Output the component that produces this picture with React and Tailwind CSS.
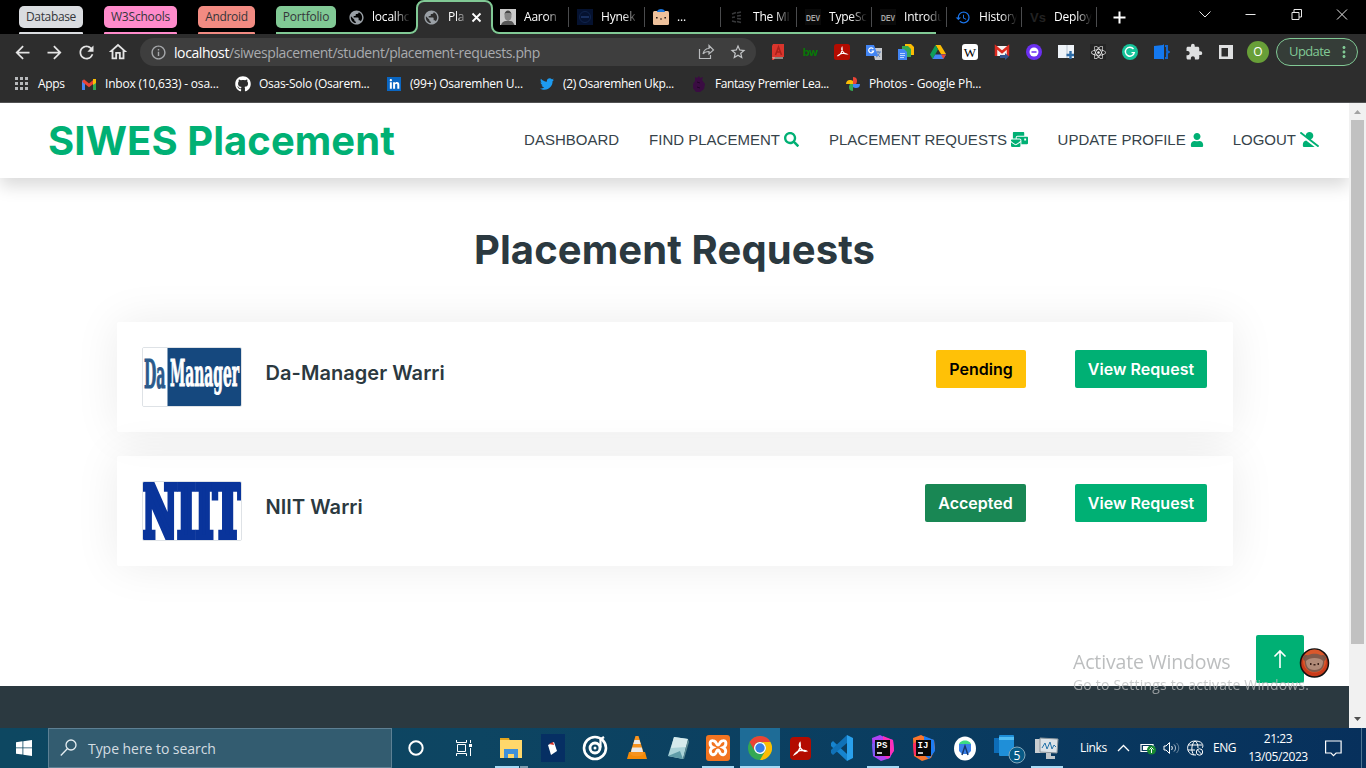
import React from "react";
import { FaSearch, FaMailBulk, FaUser, FaUserSlash, FaGithub, FaTwitter, FaLinkedinIn, FaReact } from "react-icons/fa";
import {
  MdArrowBack, MdArrowForward, MdRefresh, MdOutlineHome, MdInfoOutline, MdStarBorder,
  MdExtension, MdHistory, MdPublic, MdMoreVert,
} from "react-icons/md";

const UI = "font-['Open_Sans','Noto_Sans',sans-serif]";

/* ---------- tab strip ---------- */

function Group({ label, className, bar }) {
  return (
    <div className={"flex h-[34px] flex-col justify-between pt-[6px] " + className}>
      <div className={"flex h-[22px] items-center justify-center rounded-[5px] text-[12px] text-[#35363a] " + bar}>{label}</div>
      <div className={"h-[2px] rounded-t-[1px] " + bar} />
    </div>
  );
}

function Tab({ icon, label, className = "w-[75px]", line = true }) {
  return (
    <div className={"flex h-[34px] shrink-0 items-center pl-[8px] " + className}>
      <div className="flex h-4 w-4 shrink-0 items-center justify-center">{icon}</div>
      <div className="ml-[8px] whitespace-nowrap text-[12px] tracking-[-0.2px] text-white [mask-image:linear-gradient(90deg,#000_22px,transparent_38px)]">
        {label}
      </div>
      {line && <div className="ml-auto h-[20px] w-px bg-[#4a4b4d]" />}
    </div>
  );
}

function DevIcon() {
  return (
    <svg width="16" height="16" className="overflow-visible">
      <rect width="16" height="16" fill="#0a0a0a" />
      <text x="1" y="11.500" fontSize="9" fontWeight="bold" fontFamily="Liberation Sans, sans-serif" textLength="14" lengthAdjust="spacingAndGlyphs" fill="#a8a8a8">DEV</text>
    </svg>
  );
}

function TabStrip() {
  return (
    <div className="relative flex h-[34px] w-full bg-black">
      <svg className="absolute left-0 top-0" width="1366" height="34">
        <path d="M411 34c4 0 6-3 6-7V8c0-4 3-7 7-7h61c4 0 7 3 7 7v19c0 4 2 7 6 7z" fill="#2d2d2d" />
        <path d="M276 33h134c4 0 7-3 7-7V8c0-4 3-7 7-7h61c4 0 7 3 7 7v18c0 4 3 7 7 7h437" fill="none" stroke="#81c995" strokeWidth="2" />
      </svg>
      <div className="relative flex">
        <Group label="Database" className="ml-[19px] w-[64px] tracking-[-0.35px]" bar="bg-[#dadce0]" />
        <Group label="W3Schools" className="ml-[21px] w-[73px] tracking-[-0.2px]" bar="bg-[#ff8bcb]" />
        <Group label="Android" className="ml-[21px] w-[57px] tracking-[-0.35px]" bar="bg-[#f28b82]" />
        <Group label="Portfolio" className="ml-[21px] w-[60px] tracking-[-0.2px]" bar="bg-[#81c995]" />
        <Tab icon={<MdPublic size={17} color="#9aa0a6" className="shrink-0" />} label="localhc" className="ml-[4px] w-[76px]" line={false} />
        <div className="flex h-[34px] w-[76px] items-center pl-[8px]">
          <MdPublic size={17} color="#9aa0a6" className="-ml-px shrink-0" />
          <div className="ml-[8px] w-[18px] whitespace-nowrap text-[12px] tracking-[-0.2px] text-white [mask-image:linear-gradient(90deg,#000_8px,transparent_20px)]">Pla</div>
          <svg className="ml-[5px]" width="11" height="11" viewBox="0 0 11 11"><path d="m1.500 1.500 8 8m0-8-8 8" stroke="#fff" strokeWidth="1.800" /></svg>
        </div>
        <Tab
          className="w-[77px]"
          label="Aaron"
          icon={
            <svg width="16" height="16"><rect width="16" height="16" fill="#c9c9c9" /><path d="M1 16c1-3 3-4 4.500-4h5c2 0 3 2 4 4z" fill="#555" /><ellipse cx="8" cy="7" rx="3.500" ry="5" fill="#858585" /><path d="M4.500 6c0-6 7-6 7 0l-1-2h-5z" fill="#444" /></svg>
          }
        />
        <Tab className="w-[76px]" label="Hynek" icon={<svg width="16" height="16"><rect width="16" height="16" fill="#051230" /><circle cx="8" cy="8" r="5.500" fill="none" stroke="#10244c" /><path d="M4 8h8" stroke="#182f5e" strokeWidth="2" /></svg>} />
        <Tab
          className="w-[76px]"
          label="..."
          icon={<svg width="16" height="16"><rect y="2" width="16" height="14" rx="1.500" fill="#eec19c" /><path d="M4 3c0-4 8-4 8 0z" fill="#1a73d9" /><path d="M3 8h1.600v1.600H3zM11.400 8H13v1.600h-1.600zM7 9.500h2v1H7z" fill="#2a1c14" /></svg>}
        />
        <Tab className="w-[76px]" label="The MI" icon={<svg width="16" height="16" fill="none" stroke="#38393b" strokeWidth="1.500"><path d="m3 5 4-1.500M3 8.500 6 8m-3 4 4 1M8 4l4-1M8 7l4-.5M8 9.500l4 .5M8 12.500l4 1" /></svg>} />
        <Tab label="TypeSc" icon={<DevIcon />} />
        <Tab label="Introdu" icon={<DevIcon />} />
        <Tab label="History" icon={<MdHistory size={17} color="#1a73e8" />} />
        <Tab label="Deploy" icon={<div className="font-['Liberation_Sans',sans-serif] text-[13px] font-bold leading-none text-[#222]">Vs</div>} />
        <div className="ml-[16px] flex items-center"><svg width="13" height="13" viewBox="0 0 13 13"><path d="M6.500 0.500v12M0.500 6.500h12" stroke="#fff" strokeWidth="2" /></svg></div>
      </div>
      <svg className="relative ml-auto mr-[18px] mt-[8px]" width="150" height="13" fill="none" stroke="#e8e8e8">
        <path d="m1.500 3.500 5.500 5.500 5.500-5.500" />
        <path d="M47.500 6.500h10M94 4.500h7v7h-7zM96 4V1.500h7.500v7.500H101M139 1.500l10 10m0-10-10 10" />
      </svg>
    </div>
  );
}

/* ---------- toolbar ---------- */

function Slot({ children }) {
  return <div className="flex h-8 w-8 shrink-0 items-center justify-center">{children}</div>;
}

function Extensions() {
  return (
    <div className="ml-[6px] flex">
      <Slot><svg width="16" height="16"><path d="M3 0h11v13H5l-1 3H2V2z" fill="#d9352c" /><path d="m5.500 11 3-8 3 8m-5-3h4" fill="none" stroke="#a8201a" strokeWidth="1.500" /><path d="M2 13.500h11v1H3z" fill="#e7e3d8" /></svg></Slot>
      <Slot><span className="font-['Inter',sans-serif] text-[11px] font-bold leading-none tracking-[-0.8px] text-[#077807]">bw</span></Slot>
      <Slot><svg width="16" height="16"><rect width="16" height="16" rx="2.500" fill="#b30b00" /><path d="M3.500 12c3-1 5.500-5 4.500-8.500C7 5 9 10 12.500 10 10 8.500 6 9.500 3.500 12z" fill="none" stroke="#fff" strokeWidth="1.200" /></svg></Slot>
      <Slot><svg width="18" height="16"><path d="M7 4h10v12H10z" fill="#c6c9ce" /><path d="M10 8h6m-3-1v2m-2 4c2-1 3-2 3.500-5m-3 1 3.500 4" stroke="#5c80b8" fill="none" /><path d="M1 1h8l4 11H1z" fill="#4285f4" /><path d="M8.300 5A2.500 2.500 0 1 0 8.600 7H6.500" fill="none" stroke="#fff" strokeWidth="1.200" /></svg></Slot>
      <Slot><svg width="16" height="16"><path d="M7 0h6l3 3v8H7z" fill="#fbbc04" /><path d="M4 2h6l3 3v8H4z" fill="#34a853" /><path d="M0 5h6l3 3v8H0z" fill="#4285f4" /><path d="M2 9.500h5m-5 2h5m-5 2h4" stroke="#bcd4ff" /></svg></Slot>
      <Slot><svg width="16" height="16"><path d="M5.500 1h5L16 10h-5z" fill="#fbbc04" /><path d="M5.500 1 0 10.500 2.600 15 8 5.400z" fill="#0f9d58" /><path d="M5.200 10.500H16L13.300 15H2.600z" fill="#4285f4" /><path d="m11 10.500 5 0-2.700 4.500z" fill="#ea4335" /></svg></Slot>
      <Slot><div className="flex h-4 w-4 items-center justify-center rounded-[3px] bg-white font-['Liberation_Serif',serif] text-[13px] leading-none text-black">W</div></Slot>
      <Slot><svg width="16" height="16"><path d="M1 2h14v10H1z" fill="#f4f4f4" /><path d="M2 12V3l6 5 6-5v9" fill="none" stroke="#dc2b20" strokeWidth="2.500" /><path d="M6 11h5V9l4 3.500L11 16v-2H6z" fill="#35548e" /></svg></Slot>
      <Slot><svg width="16" height="16"><circle cx="8" cy="8" r="8" fill="#6b2ff0" /><circle cx="8" cy="8" r="4.500" fill="#fff" /><path d="M5.500 8h5" stroke="#6b2ff0" strokeWidth="1.500" /></svg></Slot>
      <Slot><svg width="16" height="16"><path d="M0 1h16v13H0z" fill="#eef3f8" /><path d="M9 1v13" stroke="#b8c3ce" /><path d="M12.500 7v8M8.500 11h8" stroke="#2d6ca8" strokeWidth="2.400" /></svg></Slot>
      <Slot><div className="flex h-4 w-4 items-center justify-center bg-[#242424]"><FaReact size={15} color="#f1f1f1" /></div></Slot>
      <Slot><svg width="16" height="16"><circle cx="8" cy="8" r="8" fill="#15c39a" /><path d="M11.500 5A4.500 4.500 0 1 0 12.300 8.600H9.500" fill="none" stroke="#fff" strokeWidth="1.400" /></svg></Slot>
      <Slot><svg width="16" height="16"><path d="M0 2 9 1l1-1v16l-1-1H0z" fill="#1479f0" /><path d="M11 2h2v5l2 1-2 1v5h-2" fill="none" stroke="#1267cf" strokeWidth="2" /></svg></Slot>
      <Slot><MdExtension size={18} color="#dfe0e1" /></Slot>
      <Slot><svg width="14" height="14"><path d="M0 0h14v14H0z" fill="#dfe0e1" /><path d="M2.500 3H9v8.500H2.500z" fill="#2d2d2d" /></svg></Slot>
    </div>
  );
}

function Toolbar() {
  return (
    <div className="flex h-[36px] w-full items-center bg-[#2d2d2d] pl-[6px]">
      <Slot><MdArrowBack size={21} color="#e4e4e4" /></Slot>
      <Slot><MdArrowForward size={21} color="#e4e4e4" /></Slot>
      <Slot><MdRefresh size={21} color="#e4e4e4" /></Slot>
      <Slot><MdOutlineHome size={22} color="#e4e4e4" /></Slot>
      <div className="ml-[6px] flex h-[28px] w-[616px] shrink-0 items-center rounded-full bg-[#3e3e3e] pl-[10px]">
        <MdInfoOutline size={17} color="#a6a8ab" />
        <div className="ml-[7px] whitespace-nowrap text-[14px] tracking-[-0.41px] text-[#a9abae]">
          <span className="text-white">localhost</span>/siwesplacement/student/placement-requests.php
        </div>
        <svg className="ml-auto mr-[13px]" width="18" height="16" fill="none" stroke="#b9bbbd" strokeWidth="1.200"><path d="M1.500 5v9.500h11V11M5 10c1-4 3-5.500 6-5.500V1.500L15.500 6 11 10V7.500C8.500 7.500 6.500 8 5 10z" /></svg>
        <MdStarBorder className="mr-[9px]" size={18} color="#c4c6c8" />
      </div>
      <Extensions />
      <div className="ml-[5px] flex h-[22px] w-[22px] shrink-0 items-center justify-center rounded-full bg-[#689f38] text-[12px] text-white">O</div>
      <div className="ml-[7px] flex h-[28px] w-[82px] shrink-0 items-center rounded-full border border-[#81c995] bg-[#353d38] pl-[12px] text-[13px] tracking-[-0.6px] text-[#81c995]">
        Update
        <MdMoreVert className="ml-auto mr-[4px]" size={18} />
      </div>
    </div>
  );
}

/* ---------- bookmarks ---------- */

function Bookmark({ icon, children, className }) {
  return (
    <div className={"flex shrink-0 items-center " + className}>
      <div className="flex h-4 w-4 items-center justify-center">{icon}</div>
      <div className="ml-[8px] whitespace-nowrap text-[12px] text-white">{children}</div>
    </div>
  );
}

function Bookmarks() {
  return (
    <div className="flex h-[33px] w-full items-center border-b border-[#515253] bg-[#2d2d2d] pb-[4px] pl-[14px]">
      <Bookmark className="w-[67px] tracking-[-0.3px]" icon={<svg width="14" height="14" fill="#b7b9bb"><path d="M0 0h3v3H0zM5 0h3v3H5zM10 0h3v3h-3zM0 5h3v3H0zM5 5h3v3H5zM10 5h3v3h-3zM0 10h3v3H0zM5 10h3v3H5zM10 10h3v3h-3z" /></svg>}>Apps</Bookmark>
      <Bookmark className="w-[154px] tracking-[-0.2px]" icon={<svg width="14" height="11"><path d="M1.500 11V1.500" stroke="#4285f4" strokeWidth="3" /><path d="M12.500 11V1.500" stroke="#34a853" strokeWidth="3" /><path d="M1 1.500 7 6.300l6-4.800" fill="none" stroke="#ea4335" strokeWidth="3" /><path d="M11 0h3v4l-3 2z" fill="#fbbc04" /></svg>}>Inbox (10,633) - osa...</Bookmark>
      <Bookmark className="w-[151px] tracking-[-0.28px]" icon={<FaGithub size={16} color="#fff" />}>Osas-Solo (Osarem...</Bookmark>
      <Bookmark className="w-[153px] tracking-[-0.26px]" icon={<div className="flex h-[14px] w-[14px] items-center justify-center bg-[#0a66c2]"><FaLinkedinIn size={11} color="#fff" /></div>}>(99+) Osaremhen U...</Bookmark>
      <Bookmark className="w-[152px] tracking-[-0.36px]" icon={<FaTwitter size={14} color="#1d9bf0" />}>(2) Osaremhen Ukp...</Bookmark>
      <Bookmark className="w-[154px] tracking-[-0.42px]" icon={<svg width="14" height="16"><path d="m3 1 2 1 2-2 1 2 3-1-1 3 3 4-1 5-4 3H4l-3-4 0-4 2-3z" fill="#3a0c42" /><path d="m5 6 3 1m-3 4 3 1" stroke="#220528" /></svg>}>Fantasy Premier Lea...</Bookmark>
      <Bookmark className="tracking-[-0.16px]" icon={<svg width="16" height="16"><path d="M8 8V1c5 0 4.500 5 3 7z" fill="#ea4335" /><path d="M8 8h7c0 5-5 4.500-7 3z" fill="#4285f4" /><path d="M8 8v7c-5 0-4.500-5-3-7z" fill="#34a853" /><path d="M8 8H1c0-5 5-4.500 7-3z" fill="#fbbc04" /></svg>}>Photos - Google Ph...</Bookmark>
    </div>
  );
}

/* ---------- page ---------- */

function NavItem({ children, icon, className = "" }) {
  return (
    <a className={"flex items-center whitespace-nowrap " + className}>
      {children}
      {icon && <span className="-mt-px ml-[4px] text-[#00b074]">{icon}</span>}
    </a>
  );
}

function Header() {
  return (
    <header className="flex h-[75px] w-full shrink-0 items-center justify-between bg-white pl-[48px] pr-[30px] shadow-[0_8px_16px_rgba(0,0,0,0.15)]">
      <h1 className="font-['Inter',sans-serif] text-[40px] font-bold leading-[48px] tracking-[0.05px] text-[#00b074]">SIWES Placement</h1>
      <nav className="flex items-center gap-[29px] pb-px font-['Liberation_Sans',Arial,sans-serif] text-[15px] text-[#36434a]">
        <NavItem className="mr-px">DASHBOARD</NavItem>
        <NavItem className="mr-px" icon={<FaSearch size={15} />}>FIND PLACEMENT</NavItem>
        <NavItem className="mr-[0.500px]" icon={<FaMailBulk size={17} />}>PLACEMENT REQUESTS</NavItem>
        <NavItem icon={<FaUser size={14} />}>UPDATE PROFILE</NavItem>
        <NavItem icon={<FaUserSlash size={19} />}>LOGOUT</NavItem>
      </nav>
    </header>
  );
}

function DaManagerLogo() {
  return (
    <svg width="98" height="58" viewBox="0 0 98 58" className="overflow-visible">
      <path d="M0 0h98v58H0z" fill="#fff" />
      <path d="M24.500 0H98v58H24.500z" fill="#15487e" />
      <g fontFamily="DejaVu Serif, serif" fontWeight="bold" strokeWidth="0.500">
        <text transform="translate(1 40) scale(1 2.200)" fontSize="18" textLength="21.500" lengthAdjust="spacingAndGlyphs" fill="#2b5a8b" stroke="#2b5a8b">Da</text>
        <text transform="translate(27 38) scale(1 2.050)" fontSize="18" textLength="69" lengthAdjust="spacingAndGlyphs" fill="#fff" stroke="#fff">Manager</text>
      </g>
    </svg>
  );
}

function NiitLogo() {
  return (
    <svg width="98" height="58" viewBox="0 0 98 58">
      <path d="M0 0h98v58H0z" fill="#fff" />
      <text transform="translate(-1 56) scale(1 1.500)" fontFamily="DejaVu Serif, serif" fontWeight="bold" fontSize="49.500" textLength="100" lengthAdjust="spacingAndGlyphs" fill="#09349b" stroke="#09349b" strokeWidth="5">NIIT</text>
    </svg>
  );
}

function RequestCard({ logo, name, status, statusClass }) {
  return (
    <div className="flex h-[110px] items-start rounded-[2px] px-[25px] pt-[25px] shadow-[0_0_45px_rgba(0,0,0,0.08)]">
      <div className="h-[60px] w-[100px] shrink-0 overflow-hidden rounded-[2px] border border-[#dee2e6]">{logo}</div>
      <h2 className="ml-[23.500px] mt-[14px] font-['Inter',sans-serif] text-[20px] font-semibold leading-[24px] tracking-[0.05px] text-[#2b3940]">{name}</h2>
      <div className="ml-auto mr-px mt-[3px] flex gap-[49px] font-['Inter',sans-serif] text-[16px] font-semibold leading-[24px]">
        <button className={"h-[38px] rounded-[2px] " + statusClass}>{status}</button>
        <button className="h-[38px] w-[132px] rounded-[2px] bg-[#00b074] tracking-[0.05px] text-white">View Request</button>
      </div>
    </div>
  );
}

function Page() {
  return (
    <div className="relative flex h-[625px] w-full bg-white">
      <div className="flex h-full w-[1349px] flex-col overflow-hidden">
        <Header />
        <main className="flex flex-1 flex-col pl-[117px] pr-[116px] pt-[48px]">
          <h1 className="-ml-px text-center font-['Inter',sans-serif] text-[40px] font-bold leading-[48px] tracking-[0.1px] text-[#2b3940]">Placement Requests</h1>
          <div className="mt-[48px] flex flex-col gap-[24px]">
            <RequestCard logo={<DaManagerLogo />} name="Da-Manager Warri" status="Pending" statusClass="w-[90px] bg-[#ffc107] text-black" />
            <RequestCard logo={<NiitLogo />} name="NIIT Warri" status="Accepted" statusClass="w-[101px] bg-[#198754] text-white" />
          </div>
        </main>
        <footer className="h-[42px] shrink-0 bg-[#2b3940]" />
      </div>
      <div className="flex w-[17px] flex-col items-center bg-[#f1f1f1]">
        <svg width="17" height="17"><path d="m5 11 3.500-4 3.500 4z" fill="#a3a3a3" /></svg>
        <div className="h-[524px] w-[13px] bg-[#c1c1c1]" />
        <svg className="mt-auto" width="17" height="17"><path d="m5 6 3.500 4L12 6z" fill="#505050" /></svg>
      </div>
      <div className="absolute left-[1256px] top-[532px] flex h-[48px] w-[48px] items-center justify-center rounded-[2px] bg-[#00b074]">
        <svg width="16" height="20" fill="none" stroke="#fff" strokeWidth="1.600"><path d="M8 19V2M2.500 7.500 8 2l5.500 5.500" /></svg>
      </div>
      <div className={"absolute left-[1073px] top-[545px] whitespace-nowrap text-[#b9bbbc] " + UI}>
        <div className="text-[19.500px] leading-[28px] tracking-[-0.16px] opacity-95">Activate Windows</div>
        <div className="text-[14px] leading-[18px] tracking-[0.19px] opacity-75">Go to Settings to activate Windows.</div>
      </div>
      <svg className="absolute left-[1299px] top-[545px]" width="31" height="31">
        <circle cx="15.500" cy="15" r="14" fill="#c93a1a" stroke="#111" strokeWidth="1.500" />
        <circle cx="15.500" cy="13" r="11.500" fill="#d9582c" />
        <circle cx="7" cy="10" r="3" fill="#7d5444" />
        <circle cx="24" cy="10" r="3" fill="#7d5444" />
        <path d="M6 11c2-7 17-7 19 0 1 7-2 13-9.500 13S5 18 6 11z" fill="#80594a" />
        <path d="M7 13c3-4 14-4 17 0 0 5-2 9-8.500 9S7 18 7 13z" fill="#b08a78" />
        <path d="M11 15h1.500v2H11zM18.500 15H20v2h-1.500zM14.500 16h2v1.500h-2z" fill="#3a2018" />
      </svg>
    </div>
  );
}

/* ---------- taskbar ---------- */

function TaskIcon({ children, bar, active, wide }) {
  return (
    <div className={"flex h-[40px] shrink-0 justify-center " + (wide ? "w-[41.500px]" : "w-[41px]")}>
      <div className={"flex h-[40px] w-[40px] flex-col items-center justify-between " + (active ? "bg-[#1e6c97]" : "")}>
        <div className="flex flex-1 items-center justify-center">{children}</div>
        {bar || <div className="h-0" />}
      </div>
    </div>
  );
}

const Bar = () => <div className="-mt-[2px] h-[2px] w-[32px] bg-[#a6daf5]" />;

function JetIcon({ text, a, b, c }) {
  return (
    <svg width="24" height="26" viewBox="0 0 24 26">
      <path d="m1 3 8-3 6 3 7 2 1 9-4 9-9 3-8-5z" fill={a} />
      <path d="m12 1 10 4 1 11-6 8-5-4z" fill={b} />
      <path d="M1 9 8 4v18l-6-2z" fill={c} />
      <path d="M4 5h15v16H4z" fill="#080808" />
      <text x="5.500" y="13" fontSize="9" fontWeight="bold" fontFamily="Liberation Mono, monospace" fill="#fff">{text}</text>
      <path d="M6 18h5" stroke="#fff" strokeWidth="1.500" />
    </svg>
  );
}

function Taskbar() {
  return (
    <div className={"flex h-[40px] w-full bg-[linear-gradient(90deg,#0d4761_0%,#0d4562_35%,#0a3d60_65%,#07305c_100%)] " + UI}>
      <div className="flex w-[48px] items-center justify-center">
        <svg width="16" height="16" fill="#fff"><path d="M0 2.200 6.500 1.300v6.200H0zM7.300 1.200 16 0v7.500H7.300zM0 8.300h6.500v6.200L0 13.700zM7.300 8.300H16V16l-8.700-1.200z" /></svg>
      </div>
      <div className="flex h-[40px] w-[344px] items-center border border-[#5d8094] bg-[#335c70] pl-[11px]">
        <svg width="18" height="18" fill="none" stroke="#e6eef2" strokeWidth="1.300"><circle cx="11" cy="6" r="5" /><path d="m7.300 9.700-6.500 6.800" /></svg>
        <div className="ml-[10px] text-[14px] tracking-[-0.05px] text-[#d3dde2]">Type here to search</div>
      </div>
      <div className="flex w-[98px] items-center">
        <svg className="ml-[16px]" width="16" height="16"><circle cx="8" cy="8" r="6.700" fill="none" stroke="#fff" strokeWidth="2" /></svg>
        <svg className="ml-[32px]" width="17" height="16" fill="none" stroke="#fff"><path d="M.5 0v2.500h10V0M1.500 4.500h8v7h-8zM.5 16v-2.500h10V16M14.500 0v3M14.500 8v8" /><path d="M13 4h3v3h-3z" fill="#fff" stroke="none" /></svg>
      </div>
      <div className="flex w-[578px]">
        <TaskIcon wide bar={<div className="-mt-[2px] ml-[1px] flex h-[2px]"><div className="w-[24px] bg-[#a6daf5]" /><div className="ml-px w-[8px] bg-[#7d9db0]" /></div>}>
          <svg width="24" height="24"><path d="M1 2h9l1 3H1z" fill="#e2a51d" /><path d="M1 4h22v18H1z" fill="#ffd86b" /><path d="M5 13h14v9h-4v-4H9v4H5z" fill="#3f91da" /></svg>
        </TaskIcon>
        <TaskIcon wide><svg className="ml-[2px]" width="24" height="28"><path d="M0 0h24v28H0z" fill="#062f63" /><path d="m7 11 6-3 3 9-6 4z" fill="#fff" /><path d="m8 10 4-2 1 3z" fill="#d82d20" /></svg></TaskIcon>
        <TaskIcon wide><svg className="ml-[2px]" width="26" height="28" fill="none" stroke="#fff"><circle cx="13" cy="14" r="11" strokeWidth="2.600" /><circle cx="13" cy="14" r="5" strokeWidth="2.800" /><path d="M18.500 4.500v9" strokeWidth="2.200" /><circle cx="13" cy="14" r="1.500" fill="#fff" stroke="none" /><path d="M19 5l3-2" strokeWidth="2.200" /></svg></TaskIcon>
        <TaskIcon wide><svg className="ml-[4px]" width="22" height="26"><path d="M3 17h16l2 7H1z" fill="#f58a07" /><path d="M9.500 1h3L18 19c-3 3-11 3-14 0z" fill="#f7931e" /><path d="m8.500 5-1.200 4h7.400l-1.200-4zM6.200 12.500 5 17h12l-1.200-4.500z" fill="#e9e9e9" /></svg></TaskIcon>
        <TaskIcon wide><svg className="ml-[2px]" width="24" height="24"><path d="M8 1 22 3l-5 20-15-3z" fill="#aad3d8" /><path d="m8 1 14 2-2 8L5 12z" fill="#d5eaec" /><path d="m22 3 1 3-5 17-1 0z" fill="#5d8b93" /><path d="m2 20 15 3-3-8z" fill="#5f9ca8" /></svg></TaskIcon>
        <TaskIcon wide bar={<Bar />}><svg width="24" height="26"><rect width="24" height="26" rx="3" fill="#f27420" /><path d="M8 6C3 4 3 11 7 12.500 2 15 5 22 9 19c2-1 1-4 3-4s1 3 3 4c4 3 7-4 2-6.500C21 11 21 4 16 6c-3 1-2 4-4 4S11 7 8 6z" fill="none" stroke="#fff" strokeWidth="2.900" /></svg></TaskIcon>
        <TaskIcon active bar={<div className="-mt-[2px] h-[2px] w-[40px] bg-[#a6daf5]" />}>
          <svg width="24" height="26" viewBox="0 0 24 24"><circle cx="12" cy="12" r="12" fill="#34a853" /><path d="M1.600 6A12 12 0 0 1 22.400 6H12a6 6 0 0 0-5.200 9z" fill="#ea4335" /><path d="M22.400 6A12 12 0 0 1 12 24l5.200-9A6 6 0 0 0 12 6z" fill="#fbbc04" /><circle cx="12" cy="12" r="6" fill="#fff" /><circle cx="12" cy="12" r="4.700" fill="#357ee8" /></svg>
        </TaskIcon>
        <TaskIcon><svg width="21" height="23"><rect width="21" height="23" rx="4" fill="#b30b00" /><path d="M5 17c4-2 6-7 5-11-2 3 2 9 6 8-4-2-9 0-11 3z" fill="none" stroke="#fff" strokeWidth="1.500" /></svg></TaskIcon>
        <TaskIcon><svg width="24" height="26"><path d="m1 8 2-2 14 13v7L1 11z" fill="#1684cf" /><path d="m1 18 2 2L17 8V0L1 15z" fill="#1072b8" /><path d="m17 0 6 3v20l-6 3z" fill="#29a0ec" /></svg></TaskIcon>
        <TaskIcon bar={<Bar />}><JetIcon text="PS" a="#b042f5" b="#ff2fb9" c="#7b5cf5" /></TaskIcon>
        <TaskIcon><JetIcon text="IJ" a="#f9762c" b="#1c7cf2" c="#fe2b62" /></TaskIcon>
        <TaskIcon><svg width="22" height="25"><ellipse cx="11" cy="12.500" rx="11" ry="12" fill="#fff" /><path d="M5 9c0-6 12-6 12 0z" fill="#3ddc84" /><path d="M5 8h12v7l-3 3H8l-3-3z" fill="#3a80e8" /><path d="m8 19 3-9 3 9" fill="none" stroke="#19386d" strokeWidth="1.500" /></svg></TaskIcon>
        <TaskIcon>
          <svg width="34" height="32" className="ml-[10px] shrink-0"><path d="M0 6h14v15H0z" fill="#0d6db8" /><rect x="5" y="3" width="15" height="21" rx="1" fill="#1f8fd8" /><path d="M5 5h15v3H5z" fill="#52bdf2" /><circle cx="23" cy="23" r="8" fill="#075a86" stroke="#85a8ba" /><text x="23" y="27.500" textAnchor="middle" fontSize="12" fontFamily="Open Sans, sans-serif" fill="#fff">5</text></svg>
        </TaskIcon>
        <TaskIcon bar={<Bar />}><svg width="24" height="24"><path d="M0 3h14v14H0z" fill="#c9ced1" /><path d="m5 2 18 1-1 14-17-1z" fill="#dce3e8" stroke="#8c969c" /><path d="m7 12 3-5 2 6 3-7 2 7 2-4 2 2" fill="none" stroke="#2473a9" /><path d="M11 17h5v3h4v3h-9z" fill="#bfc6ca" /></svg></TaskIcon>
      </div>
      <div className="flex flex-1 items-center text-[12px] text-white">
        <div className="ml-[12px] w-[37px] tracking-[-0.35px]">Links</div>
        <svg width="13" height="8" fill="none" stroke="#fff" strokeWidth="1.300"><path d="m1 7 5.500-5.500L12 7" /></svg>
        <svg className="ml-[10px]" width="17" height="14"><path d="M1 3.500h12v7H1zM14 5.500v3" fill="none" stroke="#fff" strokeWidth="1.200" /><path d="M3 5h6v4H3z" fill="#fff" /><circle cx="11.500" cy="9" r="4.500" fill="#188a31" /><path d="M11.500 12V8m-2 .5 2-2 2 2" stroke="#fff" fill="none" /></svg>
        <svg className="ml-[6px]" width="17" height="14" fill="none" stroke="#fff"><path d="M1 5h2l3.500-3.500v11L3 9H1z" /><path d="M8.500 5c1 1 1 3 0 4" /><path d="M11 3.500c2 2 2 5 0 7" opacity=".7" /><path d="M13.500 2c3 3 3 7 0 10" opacity=".4" /></svg>
        <svg className="ml-[7px]" width="17" height="17" fill="none" stroke="#fff"><path d="M9 15C-2 16-2 1 8 1s8 7 7 7M8 1C4 4 4 12 7 15M8 1c2 1 3 4 3 7M1 5h14M1 10h7" /><circle cx="12.500" cy="12" r="3.200" /><path d="m10.500 10 4 4" /></svg>
        <div className="ml-[9px] w-[24px] tracking-[-0.5px]">ENG</div>
        <div className="ml-[8px] w-[66px] text-center text-[12px] leading-[18px] tracking-[-0.4px]">
          <div>21:23</div>
          <div className="whitespace-nowrap">13/05/2023</div>
        </div>
        <svg className="ml-[14px]" width="17" height="17" fill="none" stroke="#fff" strokeWidth="1.200"><path d="M.6 1h15.500v12h-5L8.500 15.600 6 13H.6z" /></svg>
        <div className="ml-auto mr-[4px] h-[40px] w-px bg-[#4f7592]" />
      </div>
    </div>
  );
}

export default function App() {
  return (
    <div className={"flex h-[768px] w-[1366px] flex-col overflow-hidden bg-white " + UI}>
      <TabStrip />
      <Toolbar />
      <Bookmarks />
      <Page />
      <Taskbar />
    </div>
  );
}
